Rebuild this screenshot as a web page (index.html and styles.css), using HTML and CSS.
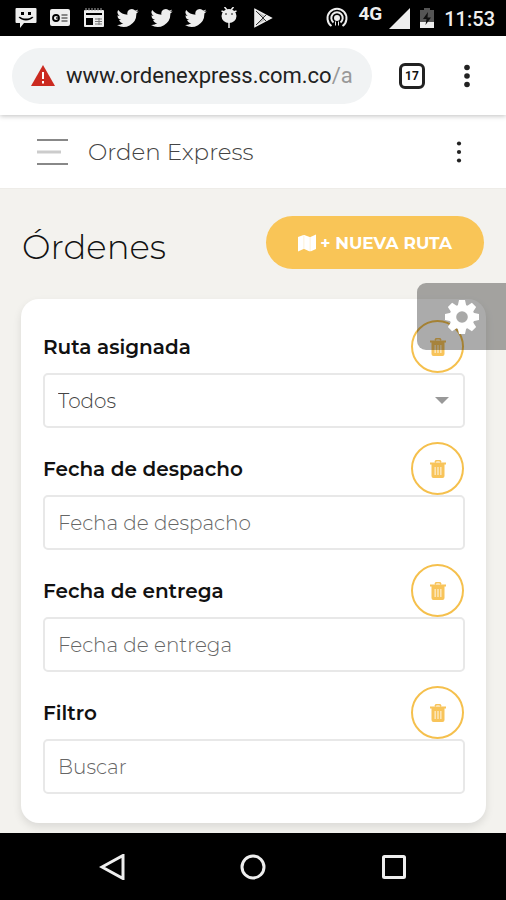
FILE: index.html
```html
<!DOCTYPE html>
<html lang="es">
<head>
<meta charset="utf-8">
<meta name="viewport" content="width=device-width, initial-scale=1">
<title>Orden Express</title>
<link rel="stylesheet" href="styles.css">
</head>
<body>
<svg class="defs" aria-hidden="true">
  <symbol id="bird" viewBox="0 0 24 24"><path d="M23.6 4.6a9.700 9.700 0 0 1-2.800.8 4.900 4.900 0 0 0 2.100-2.700 9.700 9.700 0 0 1-3.100 1.200 4.900 4.900 0 0 0-8.400 4.500A13.900 13.900 0 0 1 1.300 3.200a4.900 4.900 0 0 0 1.500 6.500 4.900 4.900 0 0 1-2.200-.6v.1a4.900 4.900 0 0 0 3.900 4.800 4.900 4.900 0 0 1-2.200.1 4.900 4.900 0 0 0 4.600 3.400A9.900 9.900 0 0 1-.3 19.500a13.900 13.900 0 0 0 21.400-12.400 9.900 9.900 0 0 0 2.500-2.500z"/></symbol>
  <symbol id="trash" viewBox="0 0 16 18"><path d="M5 2.500 6 .8h4l1 1.700" fill="none" stroke="currentColor" stroke-width="1.500"/><path d="M0 2.500h16v2H0zM1.500 4.500h13V16a2 2 0 0 1-2 2h-9a2 2 0 0 1-2-2z"/><path d="M5.200 7v8M8 7v8M10.800 7v8" stroke="#fff" stroke-opacity=".55" stroke-width="1.600"/></symbol>
</svg>

<header class="status">
  <div class="status-group">
    <svg class="status-icon" viewBox="0 0 22 22"><path fill-rule="evenodd" d="M1.500 1h19a1 1 0 0 1 1 1v13a1 1 0 0 1-1 1H9l-4 5v-5H1.500a1 1 0 0 1-1-1V2a1 1 0 0 1 1-1zM6 5v3h3V5zM13 5v3h3V5zM3.500 10c3 4.500 12 4.500 15 0l-1.500-.3c-3 2.500-9 2.500-12 0z"/></svg>
    <svg class="status-icon" viewBox="0 0 22 22"><rect x="1" y="2" width="20" height="17" rx="2"/><circle cx="7" cy="11" r="3" fill="none" stroke="#000" stroke-width="1.800"/><path d="M7 11h3" stroke="#000" stroke-width="1.300"/><path d="M12.500 8h6M12.500 11h6M12.500 14h6" stroke="#666" stroke-width="1.300"/></svg>
    <svg class="status-icon" viewBox="0 0 22 22"><rect x="1" y="3" width="20" height="17" rx="1"/><path d="M3 1v3M6 1v3M9 1v3M12 1v3M15 1v3M18 1v3" stroke="#aaa"/><path d="M3 6h16v2H3zM3 11h7v7H3z" fill="#000"/><path d="M12 12h7M12 14.500h7M12 17h7M16 11v7" stroke="#777"/></svg>
    <svg class="status-icon"><use href="#bird"/></svg>
    <svg class="status-icon"><use href="#bird"/></svg>
    <svg class="status-icon"><use href="#bird"/></svg>
    <svg class="status-icon" viewBox="0 0 22 22"><path d="M5.500 0l2.500 3M14.500 0l-2.500 3M2.500 4l3 1M17.500 4l-3 1M10 14v7" stroke="#eee" stroke-width="1.500"/><ellipse cx="10" cy="9" rx="7.500" ry="7"/><circle cx="7" cy="7" r=".8" fill="#000"/><circle cx="13" cy="7" r=".8" fill="#000"/></svg>
    <svg class="status-icon" viewBox="0 0 22 22"><path d="M2 2.500l16 8.500-16 8.500z" fill="#bbb" stroke="#eee" stroke-width="1.600"/><path d="M2 3l8 8-8 8zM13 8l5.500 3-5.500 3-3-3z"/><path d="M3 4l11 11M3 18 14 7" stroke="#333"/></svg>
  </div>
  <div class="status-group status-right">
    <svg class="status-icon" viewBox="0 0 22 22" fill="none" stroke="#eee" stroke-width="2"><path d="M5.500 19a9.500 9.500 0 1 1 11 0M7.500 15.500a5.700 5.700 0 1 1 7 0"/><circle cx="11" cy="11" r="2" fill="#eee"/><path d="M9.500 14.500v4M12.500 14.500v4" stroke-width="1"/></svg>
    <span class="network">4G</span>
    <svg class="status-icon" viewBox="0 0 22 22"><path d="M22 1v21H1z"/></svg>
    <svg class="battery" viewBox="0 0 14 20"><path d="M4 0h6v2h4v12H0V2h4z" fill="#555"/><path d="M0 14h14v6H0z"/><path d="M8 4 3 11h3.500l-1 6L11 9.500H7.500z" fill="#111"/></svg>
    <time class="clock">11:53</time>
  </div>
</header>

<div class="browser">
  <div class="address">
    <svg class="warning" viewBox="0 0 24 21"><path d="M12 0l12 21H0z" fill="#cb2a20"/><path d="M12 7v7M12 16v2.500" stroke="#fff" stroke-width="2"/></svg>
    <span class="url">www.ordenexpress.com.co<span class="path">/a</span></span>
  </div>
  <button class="tabs" aria-label="Pestañas">17</button>
  <button class="icon-button" aria-label="Menú del navegador"><svg class="dots" viewBox="0 0 8 24"><circle cx="4" cy="3.500" r="2.800"/><circle cx="4" cy="12" r="2.800"/><circle cx="4" cy="20.500" r="2.800"/></svg></button>
</div>

<nav class="appbar">
  <button class="icon-button" aria-label="Abrir menú"><svg class="burger" viewBox="0 0 32 26"><path d="M0 1h31M0 25h31" stroke="#888" stroke-width="2"/><path d="M0 13h24" stroke="#ccc" stroke-width="3"/></svg></button>
  <a class="brand" href="#">Orden Express</a>
  <button class="icon-button" aria-label="Más opciones"><svg class="dots" viewBox="0 0 8 24"><circle cx="4" cy="3.500" r="2.100"/><circle cx="4" cy="12" r="2.100"/><circle cx="4" cy="20.500" r="2.100"/></svg></button>
</nav>

<main class="page">
  <div class="heading">
    <h1>Órdenes</h1>
    <button class="new-route"><svg class="map" viewBox="0 0 18 18"><path d="M0 3l5.500-2v14L0 17.500zM6.300 1l5.400 2v14.500l-5.400-2.500zM12.500 3 18 .5V15l-5.500 2.500z"/><path d="M5 1h2v14H5zM11 3h2v14h-2z" opacity=".7"/></svg>+ NUEVA RUTA</button>
  </div>
  <form class="card">
    <div class="field">
      <div class="field-head"><label for="ruta">Ruta asignada</label><button type="button" class="clear" aria-label="Borrar ruta"><svg class="trash"><use href="#trash"/></svg></button></div>
      <div class="select-wrap"><select id="ruta" class="control"><option>Todos</option></select></div>
    </div>
    <div class="field">
      <div class="field-head"><label for="despacho">Fecha de despacho</label><button type="button" class="clear" aria-label="Borrar fecha de despacho"><svg class="trash"><use href="#trash"/></svg></button></div>
      <input id="despacho" class="control" placeholder="Fecha de despacho">
    </div>
    <div class="field">
      <div class="field-head"><label for="entrega">Fecha de entrega</label><button type="button" class="clear" aria-label="Borrar fecha de entrega"><svg class="trash"><use href="#trash"/></svg></button></div>
      <input id="entrega" class="control" placeholder="Fecha de entrega">
    </div>
    <div class="field">
      <div class="field-head"><label for="filtro">Filtro</label><button type="button" class="clear" aria-label="Borrar filtro"><svg class="trash"><use href="#trash"/></svg></button></div>
      <input id="filtro" class="control" placeholder="Buscar">
    </div>
  </form>
  <button class="settings" aria-label="Configuración"><svg class="gear" viewBox="-18 -18 36 36"><path d="M-3-17h6l1.500 7v20L3 17h-6l-1.500-7v-20z"/><path transform="rotate(45)" d="M-3-17h6l1.500 7v20L3 17h-6l-1.500-7v-20z"/><path transform="rotate(90)" d="M-3-17h6l1.500 7v20L3 17h-6l-1.500-7v-20z"/><path transform="rotate(135)" d="M-3-17h6l1.500 7v20L3 17h-6l-1.500-7v-20z"/><circle r="12.500"/><circle r="5.800" fill="#a9a9a8"/></svg></button>
</main>

<footer class="softkeys">
  <button class="icon-button" aria-label="Atrás"><svg class="key" viewBox="0 0 26 26"><path d="M24 1.500v23L3 13z"/></svg></button>
  <button class="icon-button" aria-label="Inicio"><svg class="key" viewBox="0 0 26 26"><circle cx="13" cy="13" r="11"/></svg></button>
  <button class="icon-button" aria-label="Recientes"><svg class="key" viewBox="0 0 26 26"><rect x="2.500" y="2.500" width="21" height="21" rx="1"/></svg></button>
</footer>
</body>
</html>
```
FILE: styles.css
```css
* { box-sizing: border-box; }
body {
  margin: 0;
  min-height: 100vh;
  display: flex;
  flex-direction: column;
  font-family: Montserrat, Inter, sans-serif;
  background: #f3f2ee;
  color: #111;
}
button { font: inherit; border: 0; padding: 0; background: none; color: inherit; cursor: pointer; }
svg { display: block; flex: none; }
.defs { position: absolute; width: 0; height: 0; }
.icon-button { display: flex; }

.status {
  display: flex;
  justify-content: space-between;
  height: 36px;
  padding: 0 11px 0 15px;
  background: #000;
  color: #eee;
  fill: #eee;
  font-family: Roboto, sans-serif;
}
.status-group { display: flex; align-items: center; gap: 12px; }
.status-right { gap: 10px; }
.status-icon { width: 22px; height: 22px; }
.network { font-size: 19px; font-weight: 700; line-height: 20px; align-self: flex-start; padding-top: 4px; }
.status-right .network + .status-icon { margin-left: -4px; }
.battery { width: 14px; height: 20px; }
.clock { font-size: 20px; font-weight: 500; padding-top: 2px; }

.browser {
  position: relative;
  display: flex;
  align-items: center;
  height: 79px;
  padding: 0 35px 0 12px;
  background: #fff;
  box-shadow: 0 1px 5px rgba(0, 0, 0, .25);
  font-family: Roboto, sans-serif;
}
.address {
  flex: 1;
  display: flex;
  align-items: center;
  gap: 11px;
  height: 56px;
  padding: 0 12px 0 19px;
  border-radius: 28px;
  background: #f1f3f4;
  overflow: hidden;
}
.warning { width: 24px; height: 21px; }
.url { font-size: 22px; color: #222; white-space: nowrap; }
.path { color: #999; }
.tabs {
  width: 26px;
  height: 26px;
  margin: 0 38px 0 27px;
  border: 3px solid #222;
  border-radius: 6px;
  font-size: 12px;
  font-weight: 700;
  line-height: 20px;
}
.dots { width: 8px; height: 24px; fill: #222; }

.appbar {
  display: flex;
  align-items: center;
  gap: 19px;
  height: 74px;
  padding: 0 43px 0 37px;
  background: #fff;
  border-bottom: 1px solid #eeece8;
}
.burger { width: 32px; height: 26px; }
.brand { flex: 1; font-size: 23px; font-weight: 300; color: #444; text-decoration: none; }

.page { position: relative; flex: 1; padding: 27px 20px 10px 21px; }
.heading { display: flex; justify-content: space-between; align-items: center; margin: 0 2px 30px 1px; }
h1 { margin: 0; padding-top: 10px; font-size: 34px; font-weight: 300; line-height: 43px; }
.new-route {
  display: flex;
  align-items: center;
  gap: 4px;
  height: 53px;
  padding: 0 32px;
  border-radius: 27px;
  background: #f9c557;
  color: #fff;
  fill: #fff;
  font-size: 17px;
  font-weight: 700;
}
.map { width: 18px; height: 18px; }

.card {
  display: flex;
  flex-direction: column;
  gap: 14px;
  padding: 21px 21px 29px 22px;
  border-radius: 18px;
  background: #fff;
  box-shadow: 0 4px 8px rgba(0, 0, 0, .1);
}
.field-head { display: flex; justify-content: space-between; align-items: center; padding-right: 1px; }
label { font-size: 20px; font-weight: 600; }
.clear {
  display: flex;
  align-items: center;
  justify-content: center;
  width: 53px;
  height: 53px;
  border: 2px solid #f5c04d;
  border-radius: 50%;
  color: #f8c45a;
}
.trash { width: 16px; height: 18px; fill: currentColor; }
.control {
  display: block;
  width: 100%;
  height: 55px;
  padding: 0 13px;
  border: 2px solid #e8e8e8;
  border-radius: 5px;
  background: #fff;
  color: #444;
  font: 300 20px Montserrat, Inter, sans-serif;
  appearance: none;
}
.control::placeholder { color: #666; opacity: 1; }
.select-wrap { position: relative; }
.select-wrap::after {
  content: "";
  position: absolute;
  right: 16px;
  top: 24px;
  border: solid transparent;
  border-width: 7px 7px 0;
  border-top-color: #999;
}
.settings {
  position: absolute;
  top: 94px;
  right: 0;
  width: 89px;
  height: 67px;
  display: flex;
  align-items: center;
  justify-content: center;
  border-radius: 9px 0 0 9px;
  background: rgba(0, 0, 0, .33);
}
.gear { width: 36px; height: 36px; fill: #fff; }

.softkeys {
  display: flex;
  align-items: center;
  justify-content: space-around;
  height: 67px;
  padding: 0 42px;
  background: #000;
}
.key { width: 26px; height: 26px; fill: none; stroke: #eee; stroke-width: 3; }
```
